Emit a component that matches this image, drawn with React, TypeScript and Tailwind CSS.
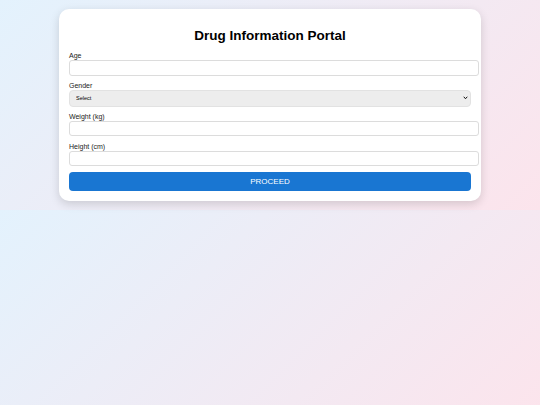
import React from "react";

const Field = ({ label }: { label: string }) => (
  <div className="mb-[5.5px]">
    <label className="block text-[7px] leading-[9px] text-[#222]">{label}</label>
    <input
      type="text"
      className="block w-[410px] h-[15.5px] border border-[#dcdcdc] rounded-[3px] bg-white outline-none"
    />
  </div>
);

export default function App() {
  return (
    <div
      className="min-h-screen w-full bg-[linear-gradient(135deg,#e3f2fd,#fce4ec)] bg-[length:100%_210px] bg-repeat pt-[9px]"
      style={{ fontFamily: '"Liberation Sans", Arial, sans-serif' }}
    >
      <div className="mx-auto w-[422px] bg-white rounded-[10px] shadow-[0_3px_10px_rgba(0,0,0,0.15)] px-[10px] pt-[10px] pb-[10px]">
        <h2 className="mt-[9px] mb-[8px] text-center text-[13.5px] leading-[15px] font-bold text-black">
          Drug Information Portal
        </h2>
        <Field label="Age" />
        <div className="mb-[5px]">
          <label className="block text-[7px] leading-[9px] text-[#222]">Gender</label>
          <div className="relative w-[402px]">
            <select className="block w-full h-[16.5px] appearance-none bg-[#ededed] border border-[#e2e2e2] rounded-[4px] pl-[6px] text-[5.5px] text-black outline-none">
              <option>Select</option>
            </select>
            <svg
              className="absolute right-[3px] top-[6px] pointer-events-none"
              width="5"
              height="4"
              viewBox="0 0 10 8"
            >
              <path d="M1.5 1.5 L5 5.5 L8.5 1.5" fill="none" stroke="#111" strokeWidth="2" />
            </svg>
          </div>
        </div>
        <Field label="Weight (kg)" />
        <Field label="Height (cm)" />
        <button className="mt-[1px] block w-[402px] h-[19px] bg-[#1976d2] rounded-[4px] text-white text-[8px] leading-[19px]">
          PROCEED
        </button>
      </div>
    </div>
  );
}
